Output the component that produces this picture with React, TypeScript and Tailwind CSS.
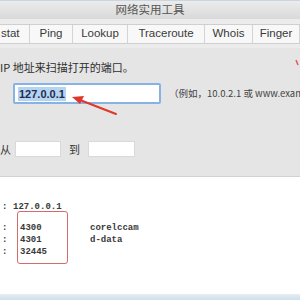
export default function App() {
  const cjk = { fontFamily: '"Noto Sans CJK SC", "Liberation Sans", sans-serif' };
  const mono = { fontFamily: '"Liberation Mono", "DejaVu Sans Mono", monospace' };
  const tabs = [
    { label: "stat", w: "w-[30px]", pad: "justify-start pl-[1px]" },
    { label: "Ping", w: "w-[43px]", pad: "justify-center" },
    { label: "Lookup", w: "w-[55px]", pad: "justify-center" },
    { label: "Traceroute", w: "w-[77px]", pad: "justify-center" },
    { label: "Whois", w: "w-[48px]", pad: "justify-center" },
    { label: "Finger", w: "w-[47px]", pad: "justify-center" },
  ];
  const rows = [
    { port: "4300", name: "corelccam" },
    { port: "4301", name: "d-data" },
    { port: "32445", name: "" },
  ];

  return (
    <div className="relative w-[300px] h-[300px] overflow-hidden bg-[#e6e6e6] text-[#333]" style={cjk}>
      {/* title bar */}
      <div className="h-[19px] border-t border-[#c9d6e2] bg-gradient-to-b from-[#ececec] to-[#d9d9d9] flex items-center justify-center text-[11.5px] text-[#555]">
        网络实用工具
      </div>

      {/* tabs */}
      <div className="bg-[#ececec] pt-[5px] pb-[4px]">
        <div className="flex h-[20px] bg-[#f8f8f8] border-y border-[#cfcfcf] text-[11.5px] text-[#3a3a3a]" style={{ fontFamily: '"Liberation Sans", sans-serif' }}>
          {tabs.map((t) => (
            <div key={t.label} className={`${t.w} ${t.pad} flex items-center border-r border-[#d4d4d4] shrink-0`}>
              {t.label}
            </div>
          ))}
        </div>
      </div>

      {/* form panel */}
      <div className="h-[129px] bg-[#e5e5e5] border-b border-[#d2d2d2] pt-[12px]">
        <div className="text-[11px] leading-[14px] whitespace-nowrap text-[#2e2e2e]">IP 地址来扫描打开的端口。</div>
        <div className="flex items-center mt-[9px] pl-[13px]">
          <div className="w-[148px] h-[21px] shrink-0 bg-white border-[2px] border-[#86b2e4] rounded-[2px] flex items-center pl-[3px]">
            <span className="bg-[#b5d3f3] text-[#1f2d4a] text-[11px] leading-[14px] px-[1px] font-semibold" style={{ fontFamily: '"Liberation Sans", sans-serif' }}>
              127.0.0.1
            </span>
          </div>
          <div className="ml-[8px] text-[9.5px] whitespace-nowrap text-[#444]">（例如，10.0.2.1 或 www.example.com）</div>
        </div>
        <div className="flex items-center mt-[37px] text-[11px] text-[#333]">
          <span className="w-[15px]">从</span>
          <div className="w-[46px] h-[16px] bg-white border border-[#d9d9d9]" />
          <span className="ml-[8px] w-[19px]">到</span>
          <div className="w-[47px] h-[16px] bg-white border border-[#d9d9d9]" />
        </div>
      </div>

      {/* output */}
      <div className="h-[117px] bg-white pt-[24px] text-[9px] leading-[12px] text-[#3a3a3a] font-semibold" style={mono}>
        <div className="flex pl-[2px]">
          <span className="w-[11px]">:</span>
          <span>127.0.0.1</span>
        </div>
        <div className="relative mt-[9px]">
          {rows.map((r) => (
            <div key={r.port} className="flex pl-[2px]">
              <span className="w-[18px]">:</span>
              <span className="w-[70px]">{r.port}</span>
              <span>{r.name}</span>
            </div>
          ))}
          <div className="absolute left-[17px] top-[-11px] w-[51px] h-[53px] border border-[#d46a6a] rounded-[3px]" />
        </div>
      </div>

      {/* bottom strip */}
      <div className="h-[6px] bg-gradient-to-b from-[#e4eef6] to-[#cfdeea]" />

      {/* annotations */}
      <svg className="absolute left-0 top-0 pointer-events-none" width="300" height="300">
        <line x1="116" y1="114" x2="80" y2="100" stroke="#e0362b" strokeWidth="2" strokeLinecap="round" />
        <polygon points="72,97 84,96 80,104" fill="#e0362b" />
        <line x1="296" y1="60" x2="298" y2="65" stroke="#e05a5a" strokeWidth="1.5" />
      </svg>
    </div>
  );
}
